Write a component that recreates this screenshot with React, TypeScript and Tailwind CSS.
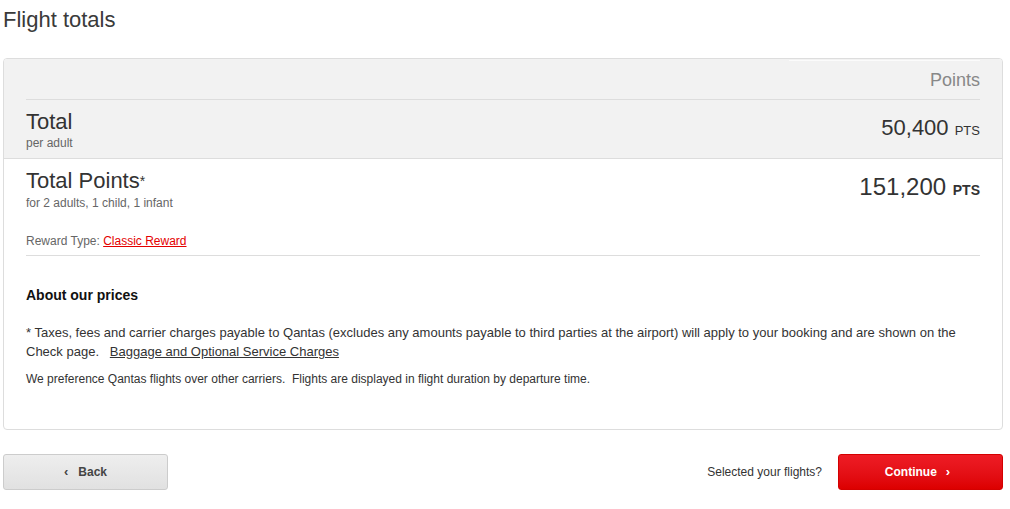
import React from "react";

export default function App() {
  return (
    <div className="w-[1010px] h-[509px] bg-white text-[#333] pl-[3px] pr-[7px]" style={{ fontFamily: '"Liberation Sans", Arial, sans-serif' }}>
      <h1 className="text-[22px] leading-[26px] pt-[7px] text-[#3a3a3a] font-normal">Flight totals</h1>
      <div className="mt-[25px] border border-[#dddddd] rounded-[4px] overflow-hidden">
        <div className="bg-[#f2f2f2] border-b border-[#dddddd] px-[22px]">
          <div className="h-[41px] pt-[1px] flex justify-end border-b border-[#dddddd]">
            <div className="w-[191px] border-t border-[#fbfbfb] flex items-center justify-end">
              <span className="text-[18px] text-[#888] pt-[1px]">Points</span>
            </div>
          </div>
          <div className="h-[58px] flex justify-between">
            <div className="pt-[10px]">
              <div className="text-[22px] leading-[24px] text-[#333]">Total</div>
              <div className="text-[12px] leading-[14px] text-[#666] mt-[2px]">per adult</div>
            </div>
            <div className="pt-[15px] text-[22px] leading-[26px] text-[#333]">
              50,400 <span className="text-[13px] uppercase">pts</span>
            </div>
          </div>
        </div>
        <div className="px-[22px]">
          <div className="flex justify-between">
            <div className="pt-[10px]">
              <div className="text-[22px] leading-[24px] text-[#333]">
                Total Points<span className="text-[14px] align-top">*</span>
              </div>
              <div className="text-[12px] leading-[14px] text-[#666] mt-[3px]">for 2 adults, 1 child, 1 infant</div>
            </div>
            <div className="pt-[14px] text-[24px] leading-[28px] text-[#333]">
              151,200 <span className="text-[14px] font-bold uppercase">pts</span>
            </div>
          </div>
          <div className="mt-[24px] pb-[7px] text-[12px] leading-[14px] text-[#666] border-b border-[#dddddd]">
            Reward Type: <a className="text-[#e40000] underline" href="#">Classic Reward</a>
          </div>
          <div className="pt-[31px] text-[14px] leading-[16px] font-bold text-[#111]">About our prices</div>
          <p className="mt-[20px] text-[13px] leading-[19px] text-[#333]">
            * Taxes, fees and carrier charges payable to Qantas (excludes any amounts payable to third parties at the airport) will apply to your booking and are shown on the Check page.&nbsp;&nbsp;&nbsp;<a className="underline text-[#333]" href="#">Baggage and Optional Service Charges</a>
          </p>
          <p className="mt-[11px] text-[12px] leading-[14px] text-[#333] pb-[43px]">
            We preference Qantas flights over other carriers.&nbsp; Flights are displayed in flight duration by departure time.
          </p>
        </div>
      </div>
      <div className="mt-[24px] flex items-center justify-between">
        <button className="w-[165px] h-[36px] rounded-[3px] border border-[#cccccc] bg-gradient-to-b from-[#eeeeee] to-[#e1e1e1] text-[12px] font-bold text-[#444] flex items-center justify-center gap-[10px]">
          <span className="text-[13px]">‹</span>
          <span>Back</span>
        </button>
        <div className="flex items-center">
          <span className="text-[12px] text-[#333] mr-[16px]">Selected your flights?</span>
          <button className="w-[165px] h-[36px] rounded-[3px] bg-gradient-to-b from-[#ee1c25] to-[#dc0000] border border-[#d40000] text-[12px] font-bold text-white flex items-center justify-center gap-[9px] pr-[6px]">
            <span>Continue</span>
            <span className="text-[13px]">›</span>
          </button>
        </div>
      </div>
    </div>
  );
}
